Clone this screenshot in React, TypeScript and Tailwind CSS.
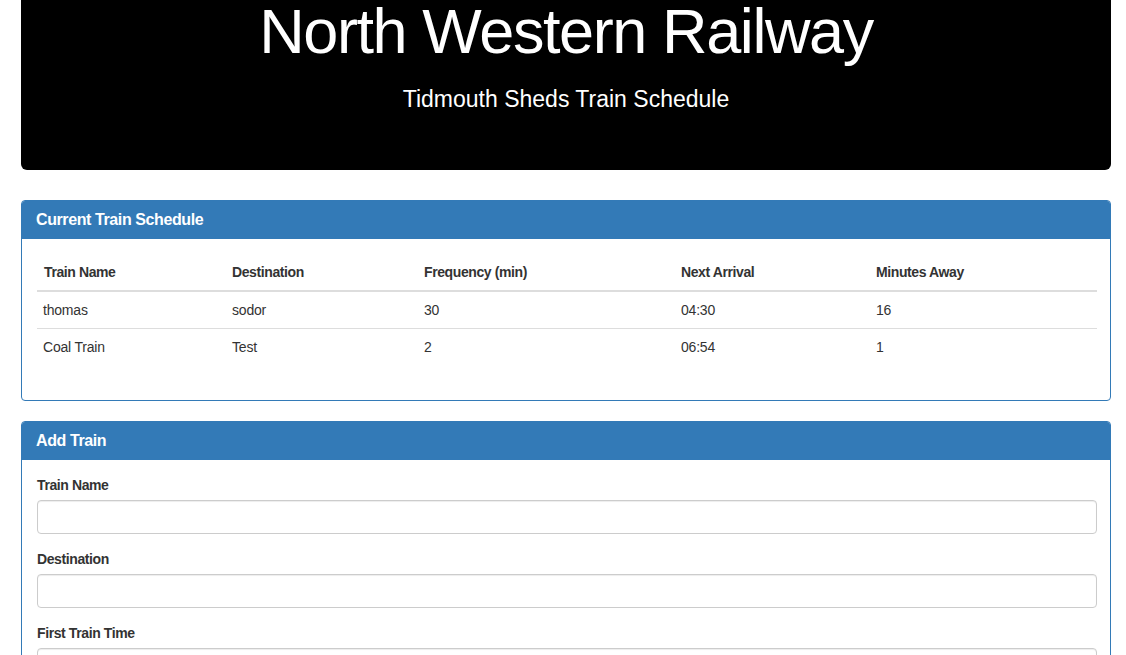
import React from "react"

const trains = [
  { name: "thomas", destination: "sodor", frequency: "30", next: "04:30", away: "16" },
  { name: "Coal Train", destination: "Test", frequency: "2", next: "06:54", away: "1" },
]

const columns = [
  { label: "Train Name", width: "w-[188px]" },
  { label: "Destination", width: "w-[192px]" },
  { label: "Frequency (min)", width: "w-[257px]" },
  { label: "Next Arrival", width: "w-[195px]" },
  { label: "Minutes Away", width: "" },
]

function Panel({ title, children }: { title: string; children: React.ReactNode }) {
  return (
    <div className="mb-[20px] rounded-[4px] border border-[#337ab7] bg-white">
      <div className="rounded-t-[3px] bg-[#337ab7] px-[14px] py-[10px]">
        <h3 className="text-[16px] leading-[18px] font-bold tracking-[-0.4px] text-white">{title}</h3>
      </div>
      <div className="pt-[15px] pr-[13px] pb-[15px] pl-[15px]">{children}</div>
    </div>
  )
}

function Field({ label, id }: { label: string; id: string }) {
  return (
    <div className="mb-[15px]">
      <label
        htmlFor={id}
        className="mb-[5px] block text-[14px] leading-[20px] font-bold tracking-[-0.4px] text-[#333]"
      >
        {label}
      </label>
      <input
        id={id}
        type="text"
        className="block h-[34px] w-full rounded-[4px] border border-[#ccc] bg-white px-[12px] py-[6px] text-[14px] text-[#555] shadow-[inset_0_1px_1px_rgba(0,0,0,0.075)] outline-none"
      />
    </div>
  )
}

export default function App() {
  return (
    <div className="min-h-screen bg-white font-['Liberation_Sans',Arial,sans-serif] text-[14px] leading-[20px] text-[#333]">
      <div className="ml-[21px] mr-[15px]">
        {/* Jumbotron */}
        <div className="mb-[30px] rounded-b-[6px] bg-black px-[60px] pb-[56px] text-center text-white">
          <h1 className="text-[63px] leading-[62px] font-normal tracking-[-1.4px]">North Western Railway</h1>
          <p className="mt-[22px] text-[23px] leading-[30px] font-light">Tidmouth Sheds Train Schedule</p>
        </div>

        <Panel title="Current Train Schedule">
          <table className="mb-[20px] w-full border-collapse">
            <thead>
              <tr>
                {columns.map((c) => (
                  <th
                    key={c.label}
                    className={`${c.width} border-b-2 border-[#ddd] py-[8px] pr-[8px] pl-[7px] text-left font-bold tracking-[-0.4px]`}
                  >
                    {c.label}
                  </th>
                ))}
              </tr>
            </thead>
            <tbody>
              {trains.map((t) => (
                <tr key={t.name} className="tracking-[-0.2px]">
                  <td className="border-t border-[#ddd] py-[8px] pr-[8px] pl-[6px]">{t.name}</td>
                  <td className="border-t border-[#ddd] py-[8px] pr-[8px] pl-[7px]">{t.destination}</td>
                  <td className="border-t border-[#ddd] py-[8px] pr-[8px] pl-[7px]">{t.frequency}</td>
                  <td className="border-t border-[#ddd] py-[8px] pr-[8px] pl-[7px]">{t.next}</td>
                  <td className="border-t border-[#ddd] py-[8px] pr-[8px] pl-[7px]">{t.away}</td>
                </tr>
              ))}
            </tbody>
          </table>
        </Panel>

        <Panel title="Add Train">
          <form onSubmit={(e) => e.preventDefault()}>
            <Field label="Train Name" id="train-name" />
            <Field label="Destination" id="destination" />
            <Field label="First Train Time" id="first-time" />
            <Field label="Frequency (min)" id="frequency" />
            <button
              type="submit"
              className="rounded-[4px] border border-[#2e6da4] bg-[#337ab7] px-[12px] py-[6px] text-[14px] text-white"
            >
              Submit
            </button>
          </form>
        </Panel>
      </div>
    </div>
  )
}
